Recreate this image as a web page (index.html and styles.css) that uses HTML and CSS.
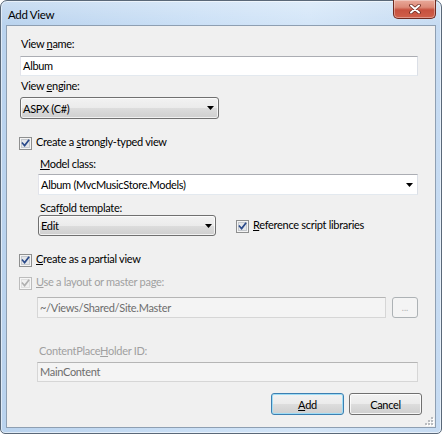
FILE: index.html
```html
<!DOCTYPE html>
<html>
<head>
<meta charset="utf-8">
<link rel="stylesheet" href="styles.css">
</head>
<body>
<div class="window">
  <div class="titlebar">
    <span class="title">Add View</span>
    <div class="close">
      <svg width="12" height="10" viewBox="0 0 12 10">
        <path d="M2 1.5 L10 8.5 M10 1.5 L2 8.5" stroke="#6b2a20" stroke-width="3.6" stroke-linecap="round"/>
        <path d="M2 1.5 L10 8.5 M10 1.5 L2 8.5" stroke="#ffffff" stroke-width="2" stroke-linecap="round"/>
      </svg>
    </div>
  </div>
  <div class="client">
    <div class="lbl lbl-name">View <u>n</u>ame:</div>
    <div class="textbox tb-name">Album</div>
    <div class="lbl lbl-engine">View <u>e</u>ngine:</div>
    <div class="ddl ddl-engine"><span>ASPX (C#)</span><svg class="arrow" width="7" height="4" viewBox="0 0 7 4"><path d="M0 0 H7 L3.5 4 Z"/></svg></div>

    <div class="check-row row-typed">
      <svg class="cb" width="13" height="13" viewBox="0 0 13 13"><rect class="cb-box" x="0.5" y="0.5" width="12" height="12"/><rect class="cb-in" x="2.5" y="2.5" width="8" height="8"/><path class="cb-tick" d="M3.5 6.2 L5.6 8.6 L9.6 3.4"/></svg>
      <span>Create a <u>s</u>trongly-typed view</span>
    </div>

    <div class="indent">
      <div class="lbl lbl-model"><u>M</u>odel class:</div>
      <div class="combo"><span>Album (MvcMusicStore.Models)</span><svg class="arrow" width="7" height="4" viewBox="0 0 7 4"><path d="M0 0 H7 L3.5 4 Z"/></svg></div>
      <div class="lbl lbl-scaffold">Scaf<u>f</u>old template:</div>
      <div class="scaffold-row">
        <div class="ddl ddl-edit"><span>Edit</span><svg class="arrow" width="7" height="4" viewBox="0 0 7 4"><path d="M0 0 H7 L3.5 4 Z"/></svg></div>
        <div class="check-row row-ref">
          <svg class="cb" width="13" height="13" viewBox="0 0 13 13"><rect class="cb-box" x="0.5" y="0.5" width="12" height="12"/><rect class="cb-in" x="2.5" y="2.5" width="8" height="8"/><path class="cb-tick" d="M3.5 6.2 L5.6 8.6 L9.6 3.4"/></svg>
          <span><u>R</u>eference script libraries</span>
        </div>
      </div>
    </div>

    <div class="check-row row-partial">
      <svg class="cb" width="13" height="13" viewBox="0 0 13 13"><rect class="cb-box" x="0.5" y="0.5" width="12" height="12"/><rect class="cb-in" x="2.5" y="2.5" width="8" height="8"/><path class="cb-tick" d="M3.5 6.2 L5.6 8.6 L9.6 3.4"/></svg>
      <span><u>C</u>reate as a partial view</span>
    </div>
    <div class="check-row row-layout disabled">
      <svg class="cb" width="13" height="13" viewBox="0 0 13 13"><rect class="cb-box" x="0.5" y="0.5" width="12" height="12"/><rect class="cb-in" x="2.5" y="2.5" width="8" height="8"/><path class="cb-tick" d="M3.5 6.2 L5.6 8.6 L9.6 3.4"/></svg>
      <span><u>U</u>se a layout or master page:</span>
    </div>

    <div class="indent indent-master">
      <div class="master-row">
        <div class="textbox disabled tb-master">~/Views/Shared/Site.Master</div>
        <div class="browse">...</div>
      </div>
      <div class="lbl lbl-cph disabled">ContentPlace<u>H</u>older ID:</div>
      <div class="textbox disabled tb-cph">MainContent</div>
    </div>

    <div class="buttons">
      <button class="btn btn-default"><u>A</u>dd</button>
      <button class="btn">Cancel</button>
    </div>

    <svg class="grip" width="10" height="10" viewBox="0 0 10 10">
      <g fill="#ffffff">
        <rect x="8" y="2" width="2" height="2"/><rect x="5" y="5" width="2" height="2"/><rect x="8" y="5" width="2" height="2"/>
        <rect x="2" y="8" width="2" height="2"/><rect x="5" y="8" width="2" height="2"/><rect x="8" y="8" width="2" height="2"/>
      </g>
      <g fill="#b9bcc0">
        <rect x="7" y="1" width="2" height="2"/><rect x="4" y="4" width="2" height="2"/><rect x="7" y="4" width="2" height="2"/>
        <rect x="1" y="7" width="2" height="2"/><rect x="4" y="7" width="2" height="2"/><rect x="7" y="7" width="2" height="2"/>
      </g>
    </svg>
  </div>
</div>
</body>
</html>
```

FILE: styles.css
```css
html, body {
  margin: 0;
  padding: 0;
  background: #ffffff;
}

body {
  font-family: "Lato", "Open Sans", sans-serif;
  font-size: 11px;
  letter-spacing: -0.3px;
  color: #000000;
}

.window {
  width: 442px;
  height: 434px;
  box-sizing: border-box;
  border: 1px solid #5a6878;
  border-radius: 7px 7px 5px 5px;
  background:
    linear-gradient(to bottom, rgba(255,255,255,0.25), rgba(255,255,255,0) 24px),
    linear-gradient(to right, #bad3ee 0%, #cbe0f6 45%, #d4e6f8 70%, #c6dbf2 100%);
  box-shadow: inset 0 0 0 1px rgba(255,255,255,0.55);
  padding: 0 5px 5px 5px;
  display: flex;
  flex-direction: column;
}

.titlebar {
  height: 24px;
  display: flex;
  align-items: flex-start;
}

.title {
  font-size: 11.5px;
  line-height: 15px;
  margin-top: 6px;
  margin-left: 2px;
  color: #000000;
}

.close {
  margin-left: auto;
  margin-top: -1px;
  width: 43px;
  height: 19px;
  box-sizing: border-box;
  border: 1px solid #6f2a20;
  border-top: none;
  border-radius: 0 0 5px 5px;
  background: linear-gradient(to bottom, #e9a99a 0%, #dc8a78 40%, #c7513f 55%, #d0604b 100%);
  box-shadow: inset 0 0 0 1px rgba(255,255,255,0.35);
  display: flex;
  align-items: center;
  justify-content: center;
}

.client {
  flex: 1;
  position: relative;
  border: 1px solid #8e9fb2;
  background: #f0f0f0;
  padding: 0 17px 0 13px;
}

.lbl {
  line-height: 15px;
  height: 15px;
  white-space: nowrap;
}

.lbl-name { margin-top: 10px; padding-left: 1px; }
.lbl-engine { margin-top: 2px; padding-left: 1px; }
.lbl-model { margin-top: 6px; padding-left: 2px; }
.lbl-scaffold { margin-top: 5px; padding-left: 2px; }
.lbl-cph { margin-top: 25px; padding-left: 2px; }

.disabled { color: #a0a0a0; }

.textbox {
  box-sizing: border-box;
  height: 20px;
  line-height: 18px;
  padding-left: 2px;
  background: #ffffff;
  border: 1px solid #e2e3ea;
  border-top-color: #abadb3;
  border-right-color: #dbdfe6;
  border-bottom-color: #e3e9ef;
  white-space: nowrap;
}

.textbox.disabled {
  background: #f4f4f4;
  border-color: #d6d6d6;
  border-top-color: #b5b5b5;
  color: #6d6d6d;
}

.tb-name { margin-top: 5px; width: 398px; }

.ddl {
  box-sizing: border-box;
  display: flex;
  align-items: center;
  justify-content: space-between;
  padding: 0 4px 0 2px;
  border: 1px solid #707070;
  border-radius: 3px;
  background: linear-gradient(to bottom, #f2f2f2 0%, #ebebeb 50%, #dddddd 50%, #cfcfcf 100%);
  box-shadow: inset 0 0 0 1px rgba(255,255,255,0.7);
  white-space: nowrap;
}

.ddl-engine { margin-top: 4px; width: 199px; height: 22px; }
.ddl-edit { width: 178px; height: 21px; padding-right: 3px; }

.arrow path { fill: #000000; }

.row-typed { margin-top: 15px; }

.indent { padding-left: 18px; }
.indent-master { padding-left: 17px; }

.combo {
  margin-top: 3px;
  width: 380px;
  height: 21px;
  box-sizing: border-box;
  display: flex;
  align-items: center;
  justify-content: space-between;
  padding: 0 4px 0 2px;
  background: #ffffff;
  border: 1px solid #e2e3ea;
  border-top-color: #abadb3;
  border-right-color: #dbdfe6;
  border-bottom-color: #e3e9ef;
  white-space: nowrap;
}

.scaffold-row {
  margin-top: 0;
  display: flex;
  align-items: flex-start;
}

.check-row {
  display: flex;
  align-items: flex-start;
  height: 16px;
  line-height: 15px;
  white-space: nowrap;
}

.check-row .cb {
  flex: none;
  margin-top: 3px;
  margin-left: -1px;
}

.check-row span { margin-left: 4px; }

.row-ref { margin-top: 2px; margin-left: 21px; }
.row-partial { margin-top: 15px; }
.row-layout { margin-top: 7px; }

.cb-box { fill: #f4f4f4; stroke: #8e8f8f; stroke-width: 1; }
.cb-in { fill: #e4e6e9; stroke: #c5c9ce; stroke-width: 1; }
.cb-tick { fill: none; stroke: #2a4a8a; stroke-width: 1.7; stroke-linecap: square; }

.disabled .cb-box { fill: #f6f6f6; stroke: #bcbcbc; }
.disabled .cb-in { fill: #f0f0f0; stroke: #e0e0e0; }
.disabled .cb-tick { stroke: #b0b0b0; }

.master-row {
  margin-top: 7px;
  display: flex;
  align-items: flex-start;
}

.tb-master { width: 349px; height: 21px; line-height: 19px; }

.browse {
  margin-left: 6px;
  width: 26px;
  height: 21px;
  box-sizing: border-box;
  border: 1px solid #adb2b5;
  border-radius: 3px;
  background: #f4f4f4;
  color: #b0b0b0;
  font-size: 9px;
  letter-spacing: 0;
  line-height: 19px;
  text-align: center;
}

.tb-cph { margin-top: 4px; width: 381px; }

.buttons {
  margin-top: 11px;
  margin-right: -4px;
  display: flex;
  justify-content: flex-end;
  gap: 5px;
}

.btn {
  width: 73px;
  height: 22px;
  box-sizing: border-box;
  margin: 0;
  padding: 0;
  font-family: inherit;
  font-size: 11px;
  letter-spacing: -0.3px;
  color: #000000;
  border: 1px solid #707070;
  border-radius: 3px;
  background: linear-gradient(to bottom, #f2f2f2 0%, #ebebeb 50%, #dddddd 50%, #cfcfcf 100%);
  box-shadow: inset 0 0 0 1px rgba(255,255,255,0.8);
}

.btn-default {
  border-color: #3c7fb1;
  box-shadow: inset 0 0 0 1px #9fdcf5;
}

.grip {
  position: absolute;
  right: 1px;
  bottom: 1px;
}
```
